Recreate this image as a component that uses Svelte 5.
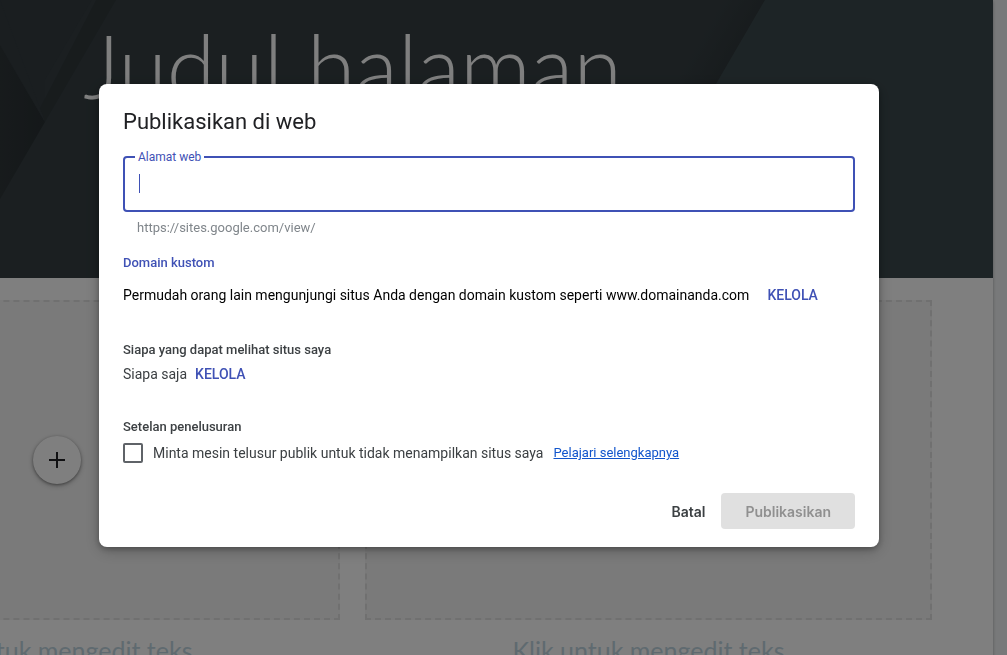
<script lang="ts">
  let address = $state('');
  let hideFromSearch = $state(false);

  const blocks = [
    { id: 1, caption: 'Klik untuk mengedit teks' },
    { id: 2, caption: 'Klik untuk mengedit teks' },
  ];
</script>

<div class="editor">
  <div class="page">
    <header class="banner">
      <svg class="banner-art" viewBox="0 0 1281 278" preserveAspectRatio="xMaxYMin slice" aria-hidden="true">
        <defs>
          <linearGradient id="fold-left" gradientUnits="userSpaceOnUse" x1="288" y1="0" x2="333" y2="0">
            <stop offset="0" stop-color="#2f3639" />
            <stop offset="1" stop-color="#293033" />
          </linearGradient>
          <linearGradient id="fold-edge" gradientUnits="userSpaceOnUse" x1="970" y1="70" x2="1008" y2="92">
            <stop offset="0" stop-color="#2f373a" stop-opacity="0" />
            <stop offset="1" stop-color="#2f373a" />
          </linearGradient>
        </defs>
        <rect width="1281" height="278" fill="#363f43" />
        <polygon points="262,0 380,0 333,80 333,122" fill="#343c40" />
        <polygon points="384,0 404,0 333,122 327,110" fill="#30383b" />
        <polygon points="0,0 262,0 333,122 242,278 0,278" fill="url(#fold-left)" />
        <polygon points="262,0 288,0 333,122 288,45" fill="#343c40" />
        <polygon points="980,0 1053,0 891,278 818,278" fill="url(#fold-edge)" />
        <polygon points="1053,0 1281,0 1281,278 891,278" fill="#3b494d" />
      </svg>
      <h1>Judul halaman</h1>
    </header>

    <div class="blocks">
      {#each blocks as block (block.id)}
        <section class="block">
          <div class="dropzone">
            <button class="add" aria-label="Tambahkan">
              <svg width="24" height="24" viewBox="0 0 24 24" aria-hidden="true">
                <path d="M11 4h2v7h7v2h-7v7h-2v-7H4v-2h7z" fill="#202124" />
              </svg>
            </button>
          </div>
          <p class="caption">{block.caption}</p>
        </section>
      {/each}
    </div>
  </div>
</div>

<div class="overlay">
  <div class="dialog" role="dialog" aria-modal="true" aria-labelledby="dialog-title">
    <h2 id="dialog-title">Publikasikan di web</h2>

    <div class="field">
      <label for="address">Alamat web</label>
      <input id="address" type="text" autocomplete="off" bind:value={address} />
      {#if !address}
        <span class="caret"></span>
      {/if}
    </div>
    <p class="helper">https://sites.google.com/view/{address}</p>

    <h3 class="accent">Domain kustom</h3>
    <div class="row domain">
      <span>Permudah orang lain mengunjungi situs Anda dengan domain kustom seperti www.domainanda.com</span>
      <button class="manage">KELOLA</button>
    </div>

    <h3>Siapa yang dapat melihat situs saya</h3>
    <div class="row viewers">
      <span>Siapa saja</span>
      <button class="manage">KELOLA</button>
    </div>

    <h3>Setelan penelusuran</h3>
    <div class="row search">
      <input id="hide" type="checkbox" bind:checked={hideFromSearch} />
      <label for="hide">Minta mesin telusur publik untuk tidak menampilkan situs saya</label>
      <a href="#learn">Pelajari selengkapnya</a>
    </div>

    <footer>
      <button class="cancel">Batal</button>
      <button class="publish" disabled={!address}>Publikasikan</button>
    </footer>
  </div>
</div>

<style>
  :global(body) {
    background: #f1f3f4;
    overflow: hidden;
  }
  .editor {
    height: 100vh;
    overflow: hidden;
    padding-right: 14px;
    font-family: Lato, sans-serif;
  }
  .page {
    margin-left: -288px;
    min-height: 100%;
    background: #fff;
    box-shadow: 0 1px 3px rgba(0, 0, 0, 0.3);
  }
  .banner {
    position: relative;
    height: 278px;
    display: flex;
    justify-content: center;
    overflow: hidden;
  }
  .banner-art {
    position: absolute;
    inset: 0;
    width: 100%;
    height: 100%;
  }
  h1 {
    position: relative;
    margin: 10px 0 0;
    color: #fff;
    font-size: 88px;
    line-height: 110px;
    font-weight: 300;
  }
  .blocks {
    display: grid;
    grid-template-columns: 1fr 1fr;
    gap: 25px;
    padding: 22px 61px;
  }
  .dropzone {
    box-sizing: border-box;
    height: 320px;
    display: flex;
    align-items: center;
    justify-content: center;
    border: 2px dashed #e0e0e0;
    background: #f5f5f5;
  }
  .add {
    width: 48px;
    height: 48px;
    padding: 0;
    border: none;
    border-radius: 50%;
    display: flex;
    align-items: center;
    justify-content: center;
    background: #fff;
    box-shadow: 0 1px 3px rgba(0, 0, 0, 0.4), 0 2px 6px rgba(0, 0, 0, 0.2);
  }
  .caption {
    margin: 14px 0 0;
    text-align: center;
    color: #bed5e0;
    font-size: 25px;
    line-height: 32px;
  }
  .overlay {
    position: fixed;
    inset: 0;
    box-sizing: border-box;
    padding: 0 29px 24px 0;
    display: flex;
    align-items: center;
    justify-content: center;
    background: rgba(0, 0, 0, 0.5);
    font-family: Roboto, sans-serif;
  }
  .dialog {
    box-sizing: border-box;
    width: min(780px, 92vw);
    padding: 24px 24px 18px;
    border-radius: 8px;
    background: #fff;
    color: #3c4043;
    font-size: 14px;
    line-height: 20px;
    box-shadow: 0 2px 6px rgba(0, 0, 0, 0.3), 0 4px 16px rgba(0, 0, 0, 0.2);
  }
  h2 {
    margin: 0 0 20px;
    color: #202124;
    font-size: 22px;
    line-height: 28px;
    font-weight: 400;
  }
  .field {
    position: relative;
    box-sizing: border-box;
    height: 56px;
    border: 2px solid #3f51b5;
    border-radius: 4px;
  }
  .field label {
    position: absolute;
    top: -9px;
    left: 10px;
    padding: 0 3px;
    background: #fff;
    color: #3f51b5;
    font-size: 12px;
    line-height: 16px;
  }
  .field input {
    box-sizing: border-box;
    width: 100%;
    height: 100%;
    padding: 0 14px;
    border: none;
    outline: none;
    background: transparent;
    color: #202124;
    font: inherit;
    font-size: 16px;
    caret-color: #3f51b5;
  }
  .caret {
    position: absolute;
    top: 16px;
    left: 14px;
    width: 1px;
    height: 19px;
    background: #3f51b5;
  }
  .helper {
    margin: 8px 0 17px;
    padding: 0 14px;
    color: #80868b;
    font-size: 13px;
    line-height: 16px;
  }
  h3 {
    margin: 0 0 4px;
    font-size: 13px;
    line-height: 20px;
    font-weight: 500;
  }
  .accent {
    margin-bottom: 12px;
    color: #3f51b5;
  }
  .row {
    display: flex;
    align-items: center;
  }
  .domain {
    gap: 18px;
    margin-bottom: 35px;
    color: #000;
  }
  .viewers {
    gap: 8px;
    margin-bottom: 33px;
  }
  .search {
    gap: 10px;
    margin-top: 6px;
  }
  .manage {
    padding: 0;
    border: none;
    background: none;
    color: #3f51b5;
    font: inherit;
    font-weight: 500;
    cursor: pointer;
  }
  .search input {
    appearance: none;
    box-sizing: border-box;
    width: 20px;
    height: 20px;
    margin: 0;
    border: 2px solid #5f6368;
    border-radius: 2px;
  }
  .search input:checked {
    border-color: #3f51b5;
    background: #3f51b5;
  }
  .search a {
    color: #1155cc;
    font-size: 13px;
  }
  footer {
    display: flex;
    justify-content: flex-end;
    gap: 16px;
    margin-top: 30px;
  }
  footer button {
    height: 36px;
    padding: 0;
    border: none;
    border-radius: 4px;
    background: none;
    color: #3c4043;
    font-family: Inter, sans-serif;
    font-size: 14px;
    font-weight: 600;
  }
  footer .publish {
    padding: 0 24px;
    background: #3f51b5;
    color: #fff;
  }
  footer .publish:disabled {
    background: #e0e0e0;
    color: #909090;
  }
</style>
